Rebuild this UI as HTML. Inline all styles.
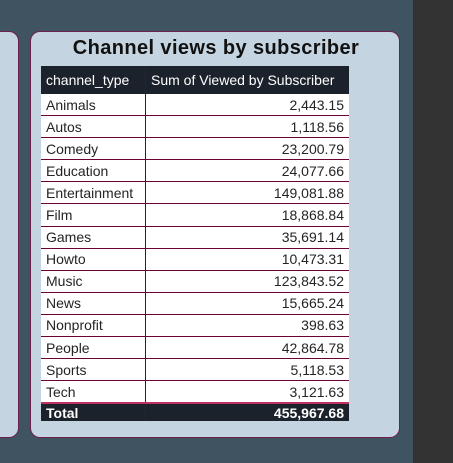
<!DOCTYPE html>
<html><head><style>
body{margin:0;width:453px;height:463px;background:#405361;position:relative;overflow:hidden;font-family:"Liberation Sans",sans-serif}
.strip{position:absolute;left:413px;top:0;width:40px;height:463px;background:#333}
.lc{position:absolute;left:-20px;top:31px;width:37px;height:405px;background:#c4d4e0;border:1px solid #6b2050;border-radius:10px}
.card{position:absolute;left:30px;top:31px;width:368px;height:405px;background:#c4d4e0;border:1px solid #6b2050;border-radius:10px}
.title{position:absolute;left:0;width:370px;top:5px;text-align:center;font-size:20px;font-weight:bold;color:#111;letter-spacing:0.4px}
table{position:absolute;left:10px;top:34px;border-collapse:collapse;width:308px;font-size:14px;color:#252423}
td,th{padding:0 5px;height:21.1px;border-bottom:1px solid #6b0033;white-space:nowrap}
th{background:#1c222b;color:#fff;font-weight:normal;text-align:left;height:28px;border-bottom:none}
td{background:#fff}
td:first-child,th:first-child{width:94px;border-right:1px solid #6b0033}
td:last-child{text-align:right}
tr.t td{background:#1c222b;color:#fff;font-weight:bold;height:17px;border-bottom:none}
</style></head><body>
<div class="strip"></div>
<div class="lc"></div>
<div class="card">
<div class="title">Channel views by subscriber</div>
<table>
<tr><th>channel_type</th><th>Sum of Viewed by Subscriber</th></tr>
<tr><td>Animals</td><td>2,443.15</td></tr>
<tr><td>Autos</td><td>1,118.56</td></tr>
<tr><td>Comedy</td><td>23,200.79</td></tr>
<tr><td>Education</td><td>24,077.66</td></tr>
<tr><td>Entertainment</td><td>149,081.88</td></tr>
<tr><td>Film</td><td>18,868.84</td></tr>
<tr><td>Games</td><td>35,691.14</td></tr>
<tr><td>Howto</td><td>10,473.31</td></tr>
<tr><td>Music</td><td>123,843.52</td></tr>
<tr><td>News</td><td>15,665.24</td></tr>
<tr><td>Nonprofit</td><td>398.63</td></tr>
<tr><td>People</td><td>42,864.78</td></tr>
<tr><td>Sports</td><td>5,118.53</td></tr>
<tr><td style="border-bottom:2px solid #c03060">Tech</td><td style="border-bottom:2px solid #c03060">3,121.63</td></tr>
<tr class="t"><td>Total</td><td>455,967.68</td></tr>
</table>
</div>
</body></html>
